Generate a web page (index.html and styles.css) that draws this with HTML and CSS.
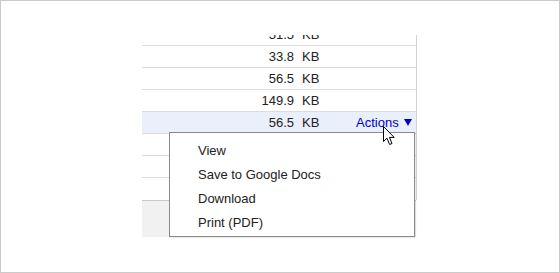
FILE: index.html
```html
<!DOCTYPE html>
<html lang="en">
<head>
<meta charset="UTF-8">
<meta name="viewport" content="width=device-width, initial-scale=1.0">
<title>Attachments - Actions menu</title>
<link rel="stylesheet" href="styles.css">
</head>
<body>

<div class="frame">
    <div class="files">
        <div class="file-list">
            <div class="file"><span class="size">51.5</span><span class="unit">KB</span></div>
            <div class="file"><span class="size">33.8</span><span class="unit">KB</span></div>
            <div class="file"><span class="size">56.5</span><span class="unit">KB</span></div>
            <div class="file"><span class="size">149.9</span><span class="unit">KB</span></div>
            <div class="file selected">
                <span class="size">56.5</span><span class="unit">KB</span>
                <a href="#" class="actions">Actions<svg class="arrow" width="8" height="7" viewBox="0 0 8 7"><path d="M0 0 H8 L4 7 Z" fill="#0000cc"/></svg></a>
            </div>
            <!-- rows below are hidden behind the menu -->
            <div class="file"></div>
            <div class="file"></div>
            <div class="file last"></div>
        </div>
        <div class="files-footer"></div>
    </div>

    <!-- Actions dropdown -->
    <ul class="menu">
        <li>View</li>
        <li>Save to Google Docs</li>
        <li>Download</li>
        <li>Print (PDF)</li>
    </ul>

    <svg class="cursor" width="13" height="20" viewBox="0 0 13 20">
        <path d="M0.5 0.5 L0.5 15.5 L4 12.2 L6.6 18.5 L9 17.5 L6.4 11.4 L11.2 11.4 Z" fill="#fff" stroke="#000" stroke-width="1"/>
    </svg>
</div>

</body>
</html>
```

FILE: styles.css
```css
body {
    font-family: "Liberation Sans", Arial, sans-serif;
    font-size: 13px;
    margin: 0;
    padding: 0;
    background-color: #fff;
    color: #222;
}
.frame {
    position: relative;
    width: 560px;
    height: 273px;
    box-sizing: border-box;
    border: 1px solid #cbcbcb;
    padding: 34px 0 0 141px;
    overflow: hidden;
}
.files {
    width: 275px;
    height: 202px;
    overflow: hidden;
}
.file-list {
    margin-top: -11px;
    border-right: 1px solid #d2d2d2;
}
.file {
    display: flex;
    align-items: center;
    height: 21px;
    border-bottom: 1px solid #dcdcdc;
}
.file.last {
    border-bottom: none;
    height: 22px;
}
.file.selected {
    background-color: #e9effb;
}
.size {
    width: 152px;
    text-align: right;
}
.unit {
    width: 62px;
    box-sizing: border-box;
    padding-left: 8px;
}
.actions {
    display: flex;
    align-items: center;
    color: #0000cc;
    text-decoration: none;
}
.arrow {
    margin-left: 5px;
}
.files-footer {
    height: 38px;
    background-color: #f1f1f1;
    border-top: 1px solid #c9c9c9;
    margin-right: 1px;
}
.menu {
    position: absolute;
    left: 168px;
    top: 131px;
    width: 246px;
    height: 105px;
    box-sizing: border-box;
    margin: 0;
    padding: 6px 0 0 28px;
    list-style: none;
    background-color: #fff;
    border: 1px solid #8a8a8a;
    box-shadow: 1px 1px 1px rgba(0, 0, 0, 0.08);
}
.menu li {
    height: 24px;
    line-height: 24px;
    color: #222;
}
.cursor {
    position: absolute;
    left: 382px;
    top: 125px;
}
```
